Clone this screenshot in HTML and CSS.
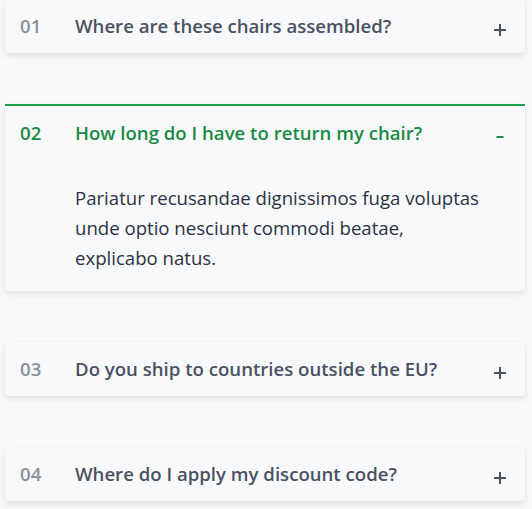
FILE: index.html
```html
<!DOCTYPE html>
<html lang="en">
<head>
<meta charset="utf-8">
<title>FAQ</title>
<link rel="stylesheet" href="styles.css">
</head>
<body>
<div class="accordion">
  <div class="item">
    <p class="number">01</p>
    <p class="question">Where are these chairs assembled?</p>
    <svg class="icon" width="12" height="12" viewBox="0 0 12 12"><path d="M6 0v12M0 6h12" stroke="currentColor" stroke-width="2" fill="none"/></svg>
  </div>
  <div class="item open">
    <p class="number">02</p>
    <p class="question">How long do I have to return my chair?</p>
    <svg class="icon" width="12" height="12" viewBox="0 0 12 12"><path d="M2.5 6h7" stroke="currentColor" stroke-width="2" fill="none"/></svg>
    <div class="answer">Pariatur recusandae dignissimos fuga voluptas unde optio nesciunt commodi beatae, explicabo natus.</div>
  </div>
  <div class="item">
    <p class="number">03</p>
    <p class="question">Do you ship to countries outside the EU?</p>
    <svg class="icon" width="12" height="12" viewBox="0 0 12 12"><path d="M6 0v12M0 6h12" stroke="currentColor" stroke-width="2" fill="none"/></svg>
  </div>
  <div class="item">
    <p class="number">04</p>
    <p class="question">Where do I apply my discount code?</p>
    <svg class="icon" width="12" height="12" viewBox="0 0 12 12"><path d="M6 0v12M0 6h12" stroke="currentColor" stroke-width="2" fill="none"/></svg>
  </div>
</div>
</body>
</html>
```
FILE: styles.css
```css
html, body {
  margin: 0;
  padding: 0;
  background: #f8f9fb;
  font-family: "Open Sans", "Noto Sans", sans-serif;
}
.accordion {
  display: flex;
  flex-direction: column;
  gap: 51px;
  padding: 0 7px 20px 5px;
  margin-top: -1px;
}
.item {
  display: grid;
  grid-template-columns: 55px 1fr 12px;
  align-items: center;
  padding: 14px 19px 14px 15px;
  background: #f8f9fb;
  border-radius: 4px;
  box-shadow: 0 3px 6px rgba(0, 0, 0, 0.09), 0 0 2px rgba(0, 0, 0, 0.03);
  color: #4a5262;
}
.item.open {
  border-top: 2px solid #1d9d4d;
  border-radius: 0 0 4px 4px;
  padding-bottom: 18px;
  color: #1a8a45;
}
.number {
  margin: 0;
  font-size: 18.6px;
  line-height: 26px;
  font-weight: 600;
  color: #8a919c;
}
.open .number { color: #1a8a45; }
.question {
  margin: 0;
  font-size: 18.6px;
  line-height: 26px;
  font-weight: 600;
}
.icon {
  display: block;
  margin-top: 8px;
}
.answer {
  grid-column: 2 / 3;
  max-width: 410px;
  margin-top: 37px;
  font-size: 18.6px;
  line-height: 30px;
  color: #2a3342;
}
```
